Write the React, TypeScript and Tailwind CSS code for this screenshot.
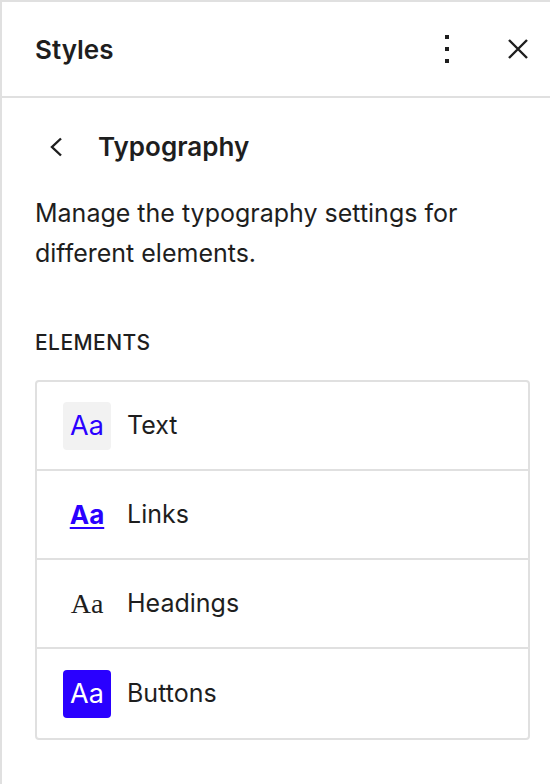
const font = { fontFamily: 'Inter, "Noto Sans", sans-serif' }

type Item = { label: string; kind: 'text' | 'links' | 'headings' | 'buttons' }

const items: Item[] = [
  { label: 'Text', kind: 'text' },
  { label: 'Links', kind: 'links' },
  { label: 'Headings', kind: 'headings' },
  { label: 'Buttons', kind: 'buttons' },
]

function Preview({ kind }: { kind: Item['kind'] }) {
  if (kind === 'text') {
    return (
      <div className="w-[48px] h-[48px] rounded-[4px] bg-[#f2f2f2] flex items-center justify-center text-[#2a00ff] text-[27px] leading-none">
        Aa
      </div>
    )
  }
  if (kind === 'links') {
    return (
      <div className="w-[48px] h-[48px] flex items-center justify-center text-[#2a00ff] text-[26px] leading-none font-bold underline decoration-2 underline-offset-[3px]">
        Aa
      </div>
    )
  }
  if (kind === 'headings') {
    return (
      <div
        className="w-[48px] h-[48px] flex items-center justify-center text-[#1e1e1e] text-[28px] leading-none"
        style={{ fontFamily: '"Liberation Serif", "DejaVu Serif", serif' }}
      >
        Aa
      </div>
    )
  }
  return (
    <div className="w-[48px] h-[48px] rounded-[4px] bg-[#2a00ff] flex items-center justify-center text-white text-[27px] leading-none">
      Aa
    </div>
  )
}

export default function App() {
  return (
    <div className="w-[550px] h-[784px] bg-white border-t-2 border-l-2 border-[#e0e0e0] text-[#1e1e1e]" style={font}>
      {/* header */}
      <div className="h-[96px] flex items-center border-b-2 border-[#e0e0e0] pl-[33px] pr-[12px]">
        <div className="flex-1 text-[26px] font-semibold">Styles</div>
        <button className="w-[41px] h-[41px] flex items-center justify-center">
          <svg width="4" height="28" viewBox="0 0 4 28" fill="#1e1e1e">
            <rect x="0" y="0" width="4" height="4" />
            <rect x="0" y="12" width="4" height="4" />
            <rect x="0" y="24" width="4" height="4" />
          </svg>
        </button>
        <button className="ml-[30px] w-[41px] h-[41px] flex items-center justify-center">
          <svg width="20" height="20" viewBox="0 0 20 20" stroke="#1e1e1e" strokeWidth="2.4">
            <path d="M1 1L19 19M19 1L1 19" />
          </svg>
        </button>
      </div>

      {/* typography screen */}
      <div className="pt-[28px] pl-[33px] pr-[20px]">
        <div className="flex items-center h-[41px]">
          <button className="w-[41px] h-[41px] flex items-center justify-center">
            <svg width="14" height="20" viewBox="0 0 14 20" fill="none" stroke="#1e1e1e" strokeWidth="2.4">
              <path d="M12 1.5L3 10l9 8.5" />
            </svg>
          </button>
          <div className="ml-[22px] text-[26px] font-semibold">Typography</div>
        </div>

        <p className="mt-[26px] text-[25px] leading-[40px]">
          Manage the typography settings for different elements.
        </p>

        <div className="mt-[58px] text-[21px] leading-[24px] font-medium uppercase tracking-[0.02em]">Elements</div>

        <div className="mt-[25px] w-[495px] border-2 border-[#e0e0e0] rounded-[4px]">
          {items.map((item, i) => (
            <div
              key={item.label}
              className={`h-[89px] flex items-center pl-[26px] ${i < items.length - 1 ? 'border-b-2 border-[#e0e0e0]' : ''}`}
            >
              <Preview kind={item.kind} />
              <span className="ml-[16px] text-[25px]">{item.label}</span>
            </div>
          ))}
        </div>
      </div>
    </div>
  )
}
